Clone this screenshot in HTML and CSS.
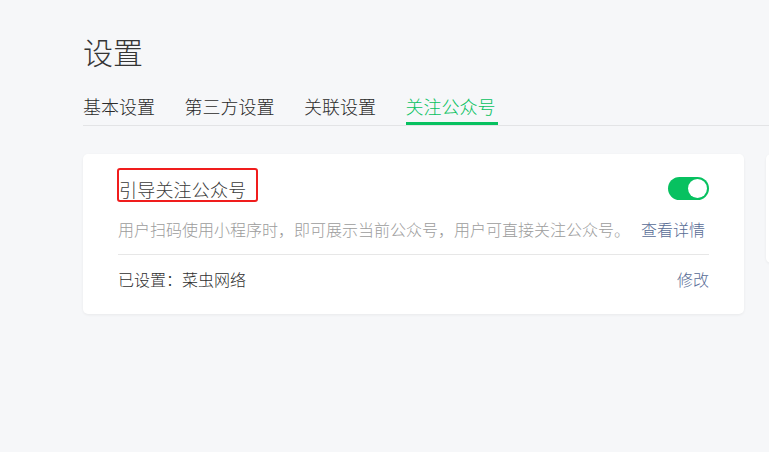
FILE: index.html
```html
<!DOCTYPE html>
<html lang="zh-CN">
<head>
<meta charset="utf-8">
<title>设置</title>
<link rel="stylesheet" href="styles.css">
</head>
<body>
<div class="page">
  <h1 class="page-title">设置</h1>
  <nav class="tabs">
    <a class="tab">基本设置</a>
    <a class="tab">第三方设置</a>
    <a class="tab">关联设置</a>
    <a class="tab tab-active">关注公众号</a>
  </nav>
  <div class="cards">
    <section class="card">
      <div class="card-head">
        <span class="card-title">引导关注公众号</span>
        <span class="switch"><span class="knob"></span></span>
      </div>
      <div class="card-desc">
        <span>用户扫码使用小程序时，即可展示当前公众号，用户可直接关注公众号。</span>
        <a class="link link-detail">查看详情</a>
      </div>
      <div class="card-foot">
        <span>已设置：菜虫网络</span>
        <a class="link">修改</a>
      </div>
    </section>
    <section class="card card-side"></section>
  </div>
</div>
</body>
</html>
```
FILE: styles.css
```css
html, body {
  margin: 0;
  padding: 0;
  background: #f6f7f9;
  overflow: hidden;
  height: 100%;
}
body {
  font-family: "Noto Sans CJK SC", "Noto Sans", sans-serif;
  font-weight: 300;
  color: #353535;
}
.page {
  padding: 30px 0 0 83px;
}
.page-title {
  margin: 0;
  font-size: 30px;
  line-height: 42px;
  font-weight: 300;
  color: #353535;
}
.tabs {
  margin-top: 22px;
  display: flex;
  gap: 29.5px;
  border-bottom: 1px solid #e3e4e6;
  height: 31px;
}
.tab {
  font-size: 18px;
  line-height: 24px;
  padding-bottom: 5px;
  color: #2a2a2a;
  border-bottom: 3px solid transparent;
  white-space: nowrap;
}
.tab-active {
  color: #07c160;
  border-bottom-color: #07c160;
  padding-right: 2px;
}
.cards {
  margin-top: 28px;
  display: flex;
  gap: 22px;
  align-items: flex-start;
}
.card {
  flex: 0 0 auto;
  width: 661px;
  box-sizing: border-box;
  background: #fff;
  border-radius: 5px;
  box-shadow: 0 1px 3px rgba(0, 0, 0, 0.06);
  padding: 14px 35px 23px;
}
.card-side {
  width: 300px;
  height: 109px;
}
.card-head {
  display: flex;
  justify-content: space-between;
  align-items: flex-start;
}
.card-title {
  display: inline-block;
  font-size: 18px;
  line-height: 22px;
  color: #3a3a3a;
  border: 2px solid #f01d1d;
  border-radius: 3px;
  padding: 8px 10px 0 0;
  margin-left: -1px;
  letter-spacing: 0.2px;
}
.switch {
  position: relative;
  width: 41px;
  height: 23px;
  border-radius: 12px;
  background: #07c160;
  margin-top: 9px;
}
.knob {
  position: absolute;
  right: 2px;
  top: 2px;
  width: 19px;
  height: 19px;
  border-radius: 50%;
  background: #fff;
}
.card-desc {
  margin-top: 15px;
  display: flex;
  font-size: 16px;
  line-height: 24px;
  color: #9c9c9c;
  padding-bottom: 13px;
  border-bottom: 1px solid #e7e7e7;
  white-space: nowrap;
}
.link-detail {
  margin-left: auto;
  margin-right: 4px;
}
.card-foot {
  margin-top: 12px;
  display: flex;
  justify-content: space-between;
  font-size: 16px;
  line-height: 24px;
  color: #2f2f2f;
}
.link {
  color: #576b95;
}
```
